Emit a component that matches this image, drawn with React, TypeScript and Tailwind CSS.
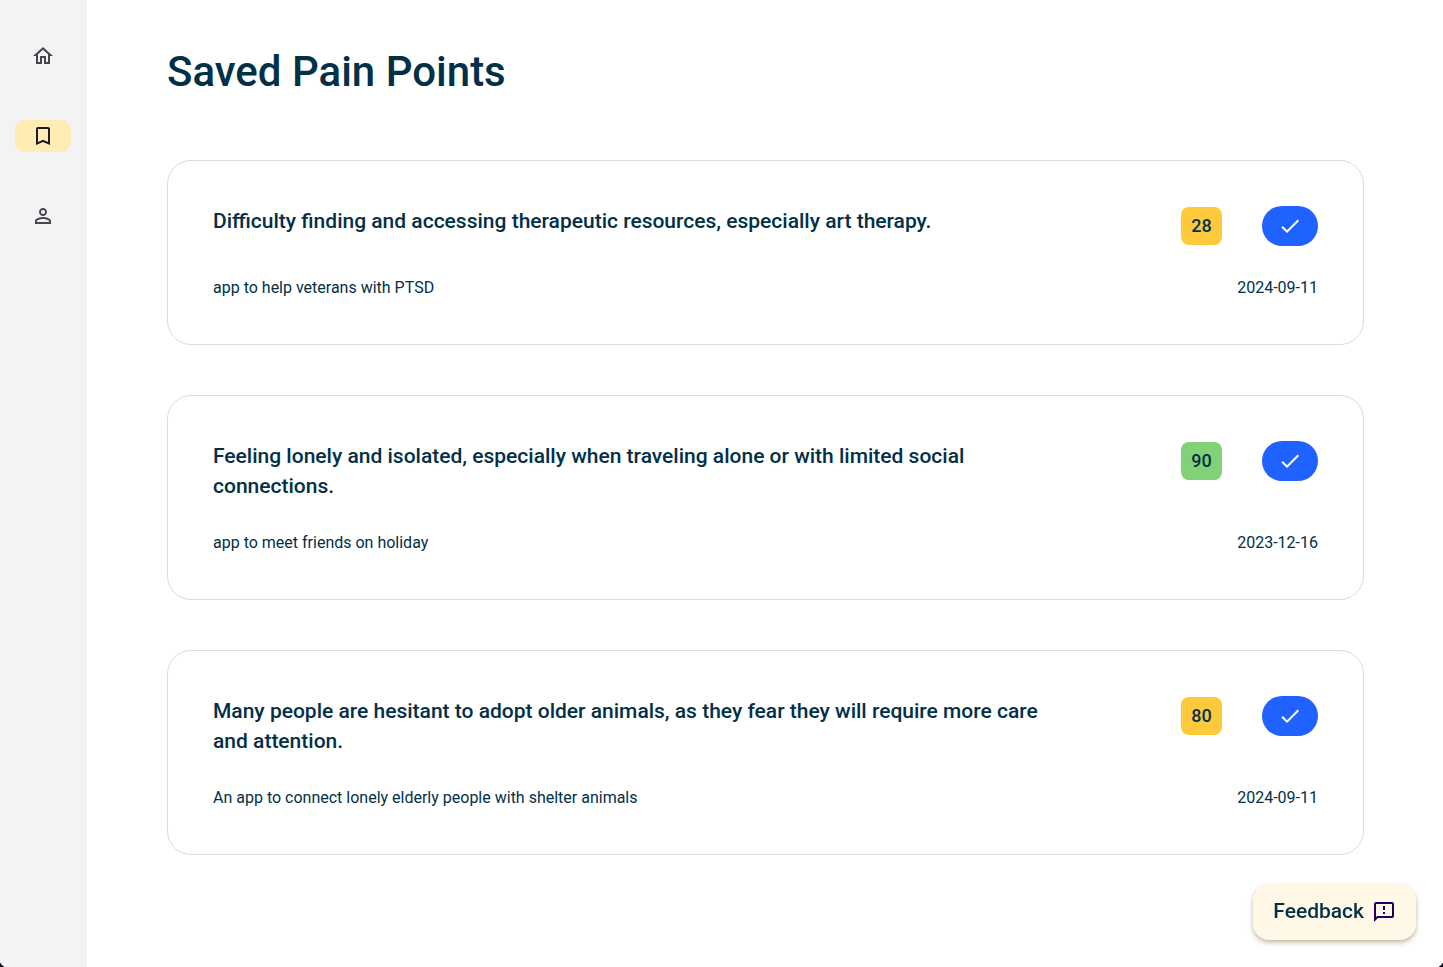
import clsx from "clsx";
import {
  MdBookmarkBorder,
  MdCheck,
  MdOutlineFeedback,
  MdOutlineHome,
  MdPersonOutline,
} from "react-icons/md";

interface PainPoint {
  title: string;
  idea: string;
  score: number;
  date: string;
}

const painPoints: PainPoint[] = [
  {
    title: "Difficulty finding and accessing therapeutic resources, especially art therapy.",
    idea: "app to help veterans with PTSD",
    score: 28,
    date: "2024-09-11",
  },
  {
    title: "Feeling lonely and isolated, especially when traveling alone or with limited social connections.",
    idea: "app to meet friends on holiday",
    score: 90,
    date: "2023-12-16",
  },
  {
    title: "Many people are hesitant to adopt older animals, as they fear they will require more care and attention.",
    idea: "An app to connect lonely elderly people with shelter animals",
    score: 80,
    date: "2024-09-11",
  },
];

const navItems = [
  { label: "Home", icon: MdOutlineHome, active: false },
  { label: "Saved", icon: MdBookmarkBorder, active: true },
  { label: "Profile", icon: MdPersonOutline, active: false },
];

function Sidebar() {
  return (
    <nav className="flex w-[87px] shrink-0 flex-col items-center gap-12 bg-[#f3f3f3] pt-10 pr-px">
      {navItems.map(({ label, icon: Icon, active }) => (
        <a
          key={label}
          href="#"
          aria-label={label}
          className={clsx(
            "flex h-8 w-14 items-center justify-center rounded-[10px]",
            active ? "bg-[#ffecb3] text-[#1d1b20]" : "text-[#49454f]"
          )}
        >
          <Icon className="size-6" />
        </a>
      ))}
    </nav>
  );
}

function PainPointCard({ title, idea, score, date }: PainPoint) {
  return (
    <article className="rounded-3xl border border-[#dcdcdc] p-[45px]">
      <div className="flex items-start">
        <h2 className="mr-[120px] flex-1 text-[21px] leading-[30px] font-medium">{title}</h2>
        <span
          className={clsx(
            "mt-px mr-10 flex h-[38px] w-[41px] items-center justify-center rounded-lg text-lg font-medium",
            score >= 90 ? "bg-[#81d176]" : "bg-[#ffc93c]"
          )}
        >
          {score}
        </span>
        <button
          type="button"
          aria-label="Remove from saved"
          className="flex h-10 w-14 items-center justify-center rounded-full bg-[#1f62ff] text-white"
        >
          <MdCheck className="size-6" />
        </button>
      </div>
      <div className="mt-[30px] flex justify-between text-base leading-[23px]">
        <p>{idea}</p>
        <time dateTime={date}>{date}</time>
      </div>
    </article>
  );
}

export default function App() {
  return (
    <div className="flex min-h-screen bg-white font-['Roboto',sans-serif] text-[#023047]">
      <Sidebar />
      <main className="flex-1 pt-10 pr-[79px] pb-28 pl-20">
        <h1 className="text-[42px] leading-[64px] font-medium">Saved Pain Points</h1>
        <div className="mt-14 flex flex-col gap-[50px]">
          {painPoints.map((point) => (
            <PainPointCard key={point.title} {...point} />
          ))}
        </div>
      </main>

      <button
        type="button"
        className="fixed right-[27px] bottom-[27px] flex h-14 items-center gap-2 rounded-2xl bg-[#fff8e6] px-5 text-[21px] font-medium shadow-[0_3px_5px_#8a7a5066,0_1px_3px_#8a7a5033]"
      >
        Feedback
        <MdOutlineFeedback className="size-6 text-[#21005d]" />
      </button>

      {/* Window corners */}
      <svg className="pointer-events-none fixed bottom-0 left-0 size-[5px]" viewBox="0 0 5 5" fill="#140a20">
        <path d="M0 0.5Q1.5 3.5 4.5 5H0z" />
      </svg>
      <svg className="pointer-events-none fixed right-0 bottom-0 size-[5px]" viewBox="0 0 5 5" fill="#140a20">
        <path d="M5 0.5Q3.5 3.5 0.5 5H5z" />
      </svg>
    </div>
  );
}
